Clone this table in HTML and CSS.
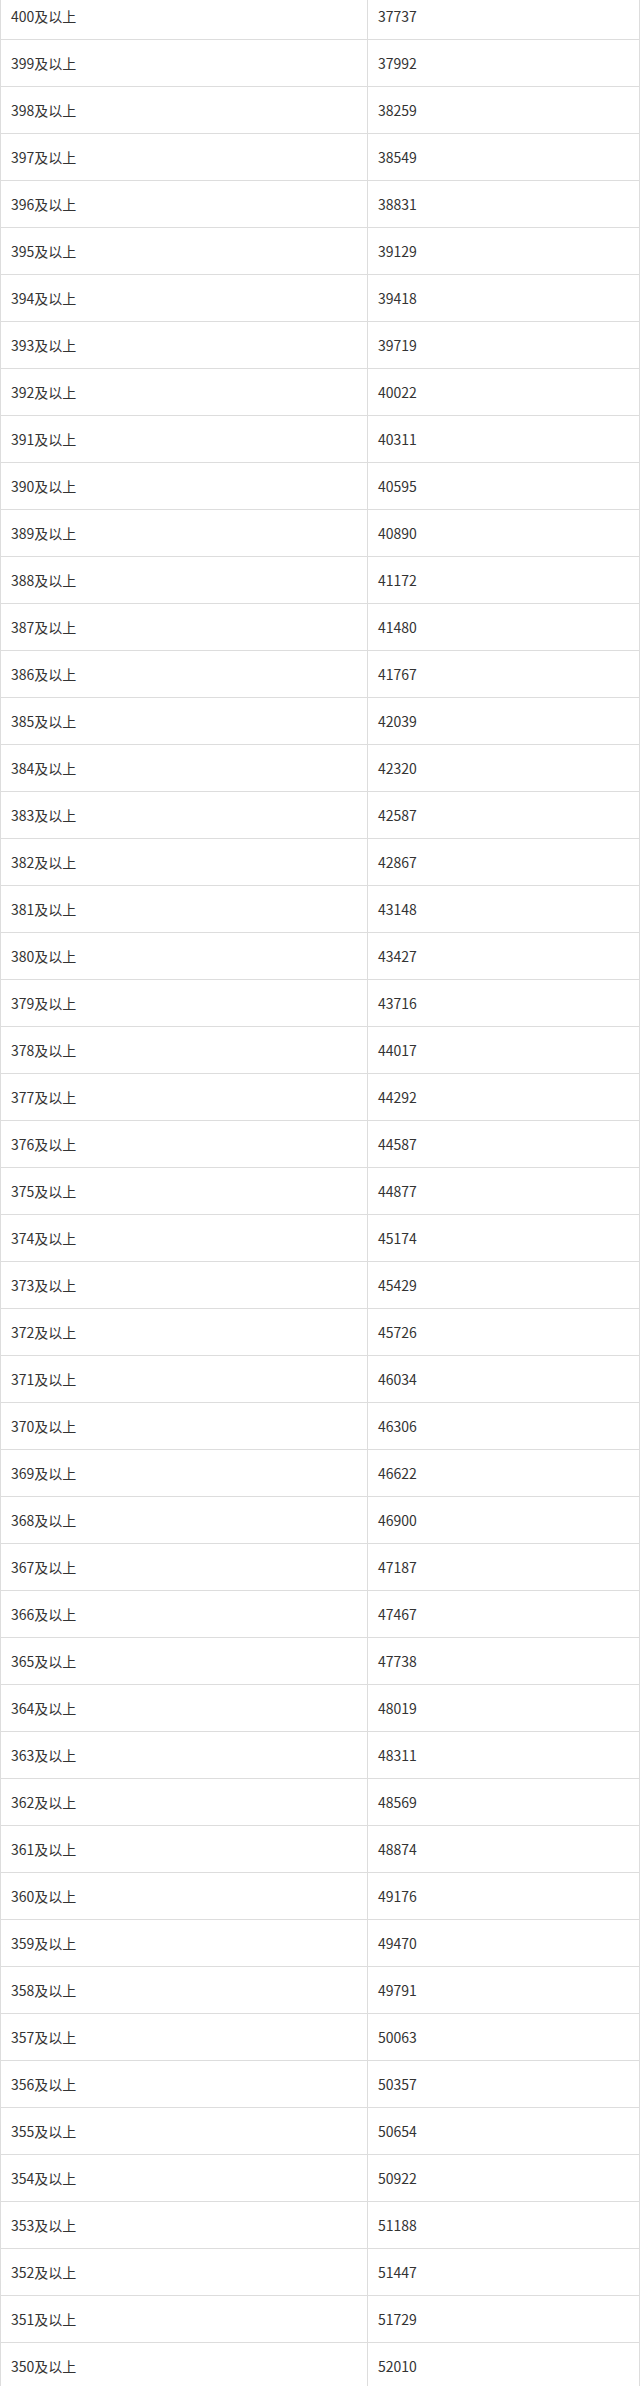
FILE: index.html
```html
<!DOCTYPE html>
<html lang="zh-CN">
<head>
<meta charset="utf-8">
<title>分数段统计</title>
<link rel="stylesheet" href="styles.css">
</head>
<body>
<table class="score-table">
  <colgroup><col class="col-score"><col class="col-rank"></colgroup>
  <tbody>
    <tr><td>400及以上</td><td>37737</td></tr>
    <tr><td>399及以上</td><td>37992</td></tr>
    <tr><td>398及以上</td><td>38259</td></tr>
    <tr><td>397及以上</td><td>38549</td></tr>
    <tr><td>396及以上</td><td>38831</td></tr>
    <tr><td>395及以上</td><td>39129</td></tr>
    <tr><td>394及以上</td><td>39418</td></tr>
    <tr><td>393及以上</td><td>39719</td></tr>
    <tr><td>392及以上</td><td>40022</td></tr>
    <tr><td>391及以上</td><td>40311</td></tr>
    <tr><td>390及以上</td><td>40595</td></tr>
    <tr><td>389及以上</td><td>40890</td></tr>
    <tr><td>388及以上</td><td>41172</td></tr>
    <tr><td>387及以上</td><td>41480</td></tr>
    <tr><td>386及以上</td><td>41767</td></tr>
    <tr><td>385及以上</td><td>42039</td></tr>
    <tr><td>384及以上</td><td>42320</td></tr>
    <tr><td>383及以上</td><td>42587</td></tr>
    <tr><td>382及以上</td><td>42867</td></tr>
    <tr><td>381及以上</td><td>43148</td></tr>
    <tr><td>380及以上</td><td>43427</td></tr>
    <tr><td>379及以上</td><td>43716</td></tr>
    <tr><td>378及以上</td><td>44017</td></tr>
    <tr><td>377及以上</td><td>44292</td></tr>
    <tr><td>376及以上</td><td>44587</td></tr>
    <tr><td>375及以上</td><td>44877</td></tr>
    <tr><td>374及以上</td><td>45174</td></tr>
    <tr><td>373及以上</td><td>45429</td></tr>
    <tr><td>372及以上</td><td>45726</td></tr>
    <tr><td>371及以上</td><td>46034</td></tr>
    <tr><td>370及以上</td><td>46306</td></tr>
    <tr><td>369及以上</td><td>46622</td></tr>
    <tr><td>368及以上</td><td>46900</td></tr>
    <tr><td>367及以上</td><td>47187</td></tr>
    <tr><td>366及以上</td><td>47467</td></tr>
    <tr><td>365及以上</td><td>47738</td></tr>
    <tr><td>364及以上</td><td>48019</td></tr>
    <tr><td>363及以上</td><td>48311</td></tr>
    <tr><td>362及以上</td><td>48569</td></tr>
    <tr><td>361及以上</td><td>48874</td></tr>
    <tr><td>360及以上</td><td>49176</td></tr>
    <tr><td>359及以上</td><td>49470</td></tr>
    <tr><td>358及以上</td><td>49791</td></tr>
    <tr><td>357及以上</td><td>50063</td></tr>
    <tr><td>356及以上</td><td>50357</td></tr>
    <tr><td>355及以上</td><td>50654</td></tr>
    <tr><td>354及以上</td><td>50922</td></tr>
    <tr><td>353及以上</td><td>51188</td></tr>
    <tr><td>352及以上</td><td>51447</td></tr>
    <tr><td>351及以上</td><td>51729</td></tr>
    <tr><td>350及以上</td><td>52010</td></tr>
  </tbody>
</table>
</body>
</html>
```

FILE: styles.css
```css
html, body {
  margin: 0;
  padding: 0;
  background: #fff;
}

.score-table {
  width: 640px;
  margin-top: -8px;
  border-collapse: collapse;
  table-layout: fixed;
  font-family: "Noto Sans CJK SC", "Microsoft YaHei", sans-serif;
  font-size: 14px;
  color: #333;
}

.col-score {
  width: 367px;
}

.score-table td {
  border: 1px solid #ddd;
  height: 47px;
  padding: 0 10px;
  line-height: 22px;
  vertical-align: middle;
  box-sizing: border-box;
  white-space: nowrap;
}
```
